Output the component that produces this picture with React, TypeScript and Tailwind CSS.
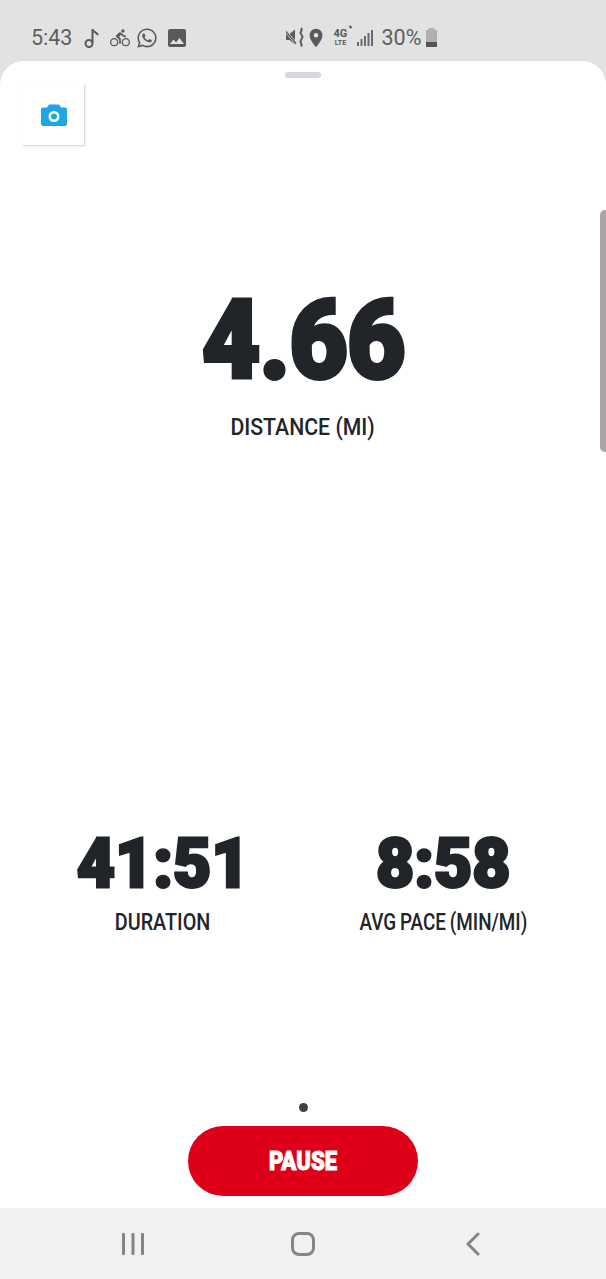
import React from "react";
import { FaWhatsapp } from "react-icons/fa";
import { MdDirectionsBike, MdImage, MdLocationOn } from "react-icons/md";

const font = { heavy: "font-['Roboto',sans-serif] font-black", label: "font-['Roboto',sans-serif] font-medium" };

const MuteVibrate = () => (
  <svg width="19" height="21" viewBox="0 0 19 21" fill="#5a5a5a">
    <path d="M0 7h3.500L9 2.500v15L3.500 13H0z" />
    <path d="M0 3l11 13-1.500 1.500L-1 5z" stroke="#e2e2e2" strokeWidth="0.8" />
    <path d="M15 1c2.500 2.500-2 3.500 0 6s2 3 0 6 2.500 3.500 0 6.500" fill="none" stroke="#5a5a5a" strokeWidth="2" />
  </svg>
);

const Signal = () => (
  <svg width="17" height="18" viewBox="0 0 17 18" fill="#6a6a6a">
    <rect x="0" y="13" width="2" height="4" />
    <rect x="3.500" y="10" width="2" height="7" />
    <rect x="7" y="7" width="2" height="10" />
    <rect x="10.500" y="4" width="2" height="13" />
    <rect x="14" y="1" width="2" height="16" />
  </svg>
);

const Battery = () => (
  <svg width="13" height="20" viewBox="0 0 13 20">
    <rect x="3.500" y="0" width="6" height="3" fill="#b0b0b0" />
    <rect x="1" y="2" width="11" height="17" fill="#b0b0b0" />
    <rect x="1" y="14" width="11" height="5" fill="#555555" />
  </svg>
);

const StatusBar = () => (
  <div className="h-[61px] bg-[#e2e2e2] flex items-center pt-[14px] text-[#5f5f5f] font-['Roboto',sans-serif]">
    <span className="ml-[31px] text-[21.500px] leading-none">5:43</span>
    <svg className="ml-[12px]" width="17" height="22" viewBox="0 0 17 22" fill="none" stroke="#5a5a5a" strokeWidth="2">
      <circle cx="5" cy="16.500" r="3.500" />
      <path d="M8.500 16V2c0 3 4 3 5.500 6" />
    </svg>
    <MdDirectionsBike className="ml-[9px]" size={20} color="#5a5a5a" />
    <FaWhatsapp className="ml-[6px]" size={22} color="#5a5a5a" />
    <MdImage className="ml-[7px]" size={24} color="#5a5a5a" />
    <div className="ml-[97px]">
      <MuteVibrate />
    </div>
    <MdLocationOn size={22} color="#5a5a5a" />
    <div className="relative ml-[3px] w-[20px] flex flex-col items-center text-[#5a5a5a] font-bold">
      <span className="text-[11px] leading-[10px]">4G</span>
      <span className="text-[7px] leading-[8px]">LTE</span>
      <span className="absolute -right-[2px] -top-[3px] w-[3px] h-[2px] rotate-45 bg-[#5a5a5a]" />
    </div>
    <div className="ml-[7px]">
      <Signal />
    </div>
    <span className="ml-[7px] text-[21.500px] leading-none">30%</span>
    <div className="ml-[4px]">
      <Battery />
    </div>
  </div>
);

const Stat = ({ value, label, big, labelClass }: { value: string; label: string; big?: boolean; labelClass: string }) => (
  <div className="flex flex-col items-center text-[#212529]">
    <div
      className={`${font.heavy} whitespace-nowrap ${
        big
          ? "scale-x-[.92] text-[110px] leading-[120px] tracking-[-1px] [-webkit-text-stroke:4px_#212529]"
          : "scale-x-[.97] text-[68px] leading-[72px] [-webkit-text-stroke:3px_#212529]"
      }`}
    >
      {value}
    </div>
    <div className={`${font.label} whitespace-nowrap ${labelClass} ${big ? "mt-[12px]" : "mt-[9px]"}`}>{label}</div>
  </div>
);

export default function App() {
  return (
    <div className="w-[606px] h-[1279px] bg-[#e2e2e2] flex flex-col overflow-hidden">
      <StatusBar />
      <div className="relative h-[1147px] bg-white rounded-t-[24px] flex flex-col">
        <div className="mt-[11px] mx-auto w-[36px] h-[6px] rounded-full bg-[#d5d6e0]" />
        <div className="mt-[6px] ml-[23px] w-[62px] h-[62px] rounded-br-[3px] bg-white border-r border-b border-[#dedede] shadow-[1px_1px_2px_rgba(0,0,0,0.08)] flex items-center justify-center">
          <svg width="26" height="23" viewBox="0 0 26 23">
            <path
              fill="#1ea7e4"
              fillRule="evenodd"
              d="M8 1.500h10l2 3h4a2 2 0 0 1 2 2V21a2 2 0 0 1-2 2H2a2 2 0 0 1-2-2V6.500a2 2 0 0 1 2-2h4zM13 8a5.500 5.500 0 1 0 0 11 5.500 5.500 0 0 0 0-11zm0 2.500a3 3 0 1 1 0 6 3 3 0 0 1 0-6z"
            />
          </svg>
        </div>
        <div className="mt-[135px]">
          <Stat value="4.66" label="DISTANCE (MI)" big labelClass="scale-x-[.885] text-[24px] leading-[28px]" />
        </div>
        <div className="mt-[387px] px-[23px] grid grid-cols-2">
          <Stat value="41:51" label="DURATION" labelClass="scale-x-[.86] text-[23px] leading-[28px]" />
          <Stat value="8:58" label="AVG PACE (MIN/MI)" labelClass="scale-x-[.82] text-[23px] leading-[28px] [word-spacing:-1px]" />
        </div>
        <div className="mt-auto flex flex-col items-center pb-[12px]">
          <div className="w-[9px] h-[9px] rounded-full bg-[#3d4043]" />
          <button className="mt-[14px] w-[230px] h-[70px] rounded-full bg-[#de0018] text-white">
            <span className={`${font.heavy} block scale-x-[.85] text-[26px] leading-none [-webkit-text-stroke:1px_#ffffff]`}>PAUSE</span>
          </button>
        </div>
        {/* side handle */}
        <div className="absolute right-0 top-[149px] w-[6px] h-[242px] rounded-l-[5px] bg-[#aaa3a1]" />
      </div>
      <div className="h-[71px] bg-[#f1f1f1] grid grid-cols-[170px_170px_170px] justify-center items-center">
        <div className="flex justify-center">
          <svg width="24" height="24" viewBox="0 0 24 24" fill="#858585">
            <rect x="1" y="1" width="3" height="22" rx="1" />
            <rect x="10.500" y="1" width="3" height="22" rx="1" />
            <rect x="20" y="1" width="3" height="22" rx="1" />
          </svg>
        </div>
        <div className="flex justify-center">
          <div className="w-[24px] h-[24px] rounded-[8px] border-[3px] border-[#858585]" />
        </div>
        <div className="flex justify-center">
          <svg width="16" height="24" viewBox="0 0 16 24" fill="none" stroke="#858585" strokeWidth="3" strokeLinecap="round" strokeLinejoin="round">
            <path d="M13 2L3 12l10 10" />
          </svg>
        </div>
      </div>
    </div>
  );
}
